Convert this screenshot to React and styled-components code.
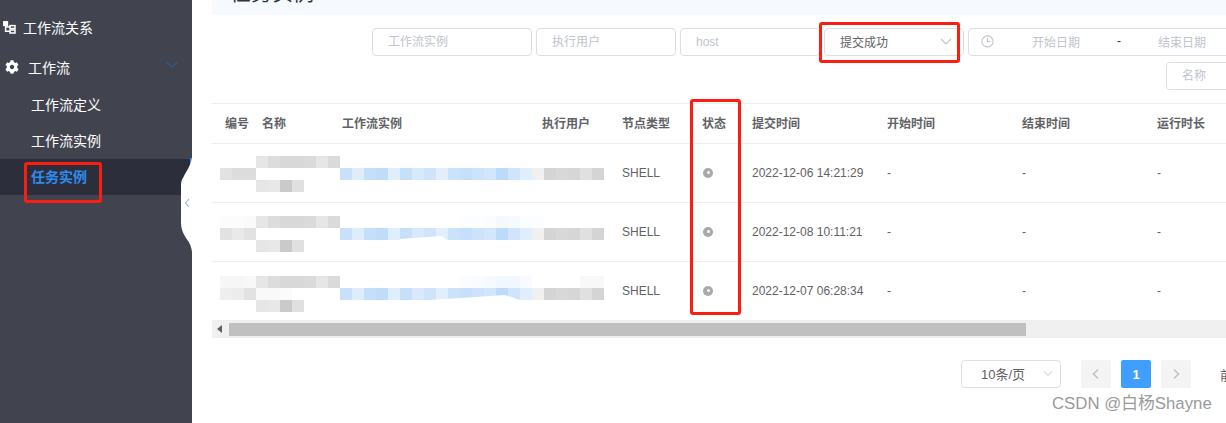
import styled, { createGlobalStyle } from "styled-components";
import { FaCog } from "react-icons/fa";

const GlobalStyle = createGlobalStyle`
  html, body { margin: 0; padding: 0; background: #fff; overflow: hidden; }
  * { box-sizing: border-box; }
  body { font-family: "Liberation Sans", "Noto Sans CJK SC", sans-serif; }
`;

const Page = styled.div`
  position: relative;
  display: flex;
  width: 1226px;
  height: 423px;
  overflow: hidden;
`;

/* sidebar */
const Sidebar = styled.aside`
  position: relative;
  flex: 0 0 192px;
  background: #41444f;
  padding-top: 9px;
`;
const MenuRow = styled.div`
  display: flex;
  align-items: center;
  height: 36px;
  margin-bottom: 4px;
  padding-left: ${(p) => p.$indent}px;
  color: #fff;
  font-size: 14px;
  gap: ${(p) => p.$gap}px;
`;
const MenuTitleChevron = styled.svg`
  margin-left: auto;
  margin-right: 12px;
  margin-top: -5px;
`;
const SubMenu = styled.div`
  margin-top: -2px;
`;
const SubItem = styled.div`
  display: flex;
  align-items: center;
  height: 36px;
  padding: 0 0 2px 31px;
  font-size: 14px;
  color: ${(p) => (p.$active ? "#2d8cf0" : "#fff")};
  font-weight: ${(p) => (p.$active ? 700 : 400)};
  background: ${(p) => (p.$active ? "#2c2f3b" : "transparent")};
`;
const ActiveMark = styled.div`
  position: absolute;
  left: 190px;
  top: 158px;
  width: 2px;
  height: 8px;
  background: #2d8cf0;
`;
const CollapseNotch = styled.svg`
  position: absolute;
  left: 178px;
  top: 155px;
`;

/* main column */
const Main = styled.main`
  flex: 1;
  min-width: 0;
  padding-left: 20px;
`;
const TitleBar = styled.div`
  height: 60px;
  margin-top: -45px;
  padding: 0 18px 7px;
  display: flex;
  align-items: flex-end;
  background: #f6faff;
  color: #2f3440;
  font-size: 21px;
  line-height: 30px;
`;
const Filters = styled.div`
  width: 1036px;
  padding-top: 13px;
  display: flex;
  flex-direction: column;
  gap: 6px;
`;
const FilterRow = styled.div`
  display: flex;
  justify-content: flex-end;
  gap: 4px;
`;
const TextInput = styled.input`
  width: ${(p) => p.$w}px;
  height: 28px;
  padding: 0 15px;
  border: 1px solid #dcdfe6;
  border-radius: 4px;
  outline: none;
  font: 12px "Liberation Sans", "Noto Sans CJK SC", sans-serif;
  color: #606266;
  &::placeholder { color: #c0c4cc; opacity: 1; }
`;
const SelectBox = styled.div`
  flex: 0 0 auto;
  display: flex;
  align-items: center;
  justify-content: space-between;
  width: ${(p) => p.$w}px;
  height: 28px;
  padding: 0 ${(p) => p.$right}px 2px ${(p) => p.$left}px;
  border: 1px solid #dcdfe6;
  border-radius: 4px;
  font-size: ${(p) => p.$size}px;
  color: #606266;
`;
const DateRange = styled.div`
  flex: 0 0 auto;
  display: flex;
  align-items: center;
  width: 280px;
  height: 28px;
  padding: 0 0 2px 12px;
  border: 1px solid #dcdfe6;
  border-radius: 4px;
  font-size: 12px;
`;
const ClockWrap = styled.svg`
  flex: 0 0 13px;
  margin-right: 7px;
`;
const DateHint = styled.span`
  flex: 0 0 ${(p) => p.$w}px;
  text-align: center;
  color: #c0c4cc;
`;
const DateDash = styled.span`
  flex: 0 0 16px;
  text-align: center;
  color: #303133;
`;

/* table */
const Table = styled.div`
  position: relative;
  margin-top: 13px;
  padding-left: 1px;
  border-top: 1px solid #ebeef5;
`;
const COLUMNS = "37px 80px 200px 80px 80px 50px 135px 135px 135px 135px";
const HeadRow = styled.div`
  display: grid;
  grid-template-columns: ${COLUMNS};
  align-items: center;
  height: 40px;
  margin-left: -1px;
  padding: 0 0 2px 1px;
  border-bottom: 1px solid #ebeef5;
  font-size: 12px;
  font-weight: 700;
  color: #606266;
`;
const BodyRow = styled.div`
  position: relative;
  display: grid;
  grid-template-columns: ${COLUMNS};
  align-items: center;
  height: 59px;
  margin-left: -1px;
  padding-left: 1px;
  border-bottom: 1px solid #ebeef5;
  font-size: 12px;
  color: #606266;
`;
const Cell = styled.div`
  padding-left: 12px;
  white-space: nowrap;
`;
const StatusDot = styled.span`
  display: flex;
  align-items: center;
  justify-content: center;
  width: 10px;
  height: 10px;
  margin: -1px 0 0 1px;
  border-radius: 50%;
  background: #a9a9a9;
  &::after {
    content: "";
    width: 3px;
    height: 3px;
    border-radius: 50%;
    background: #fff;
  }
`;
const Mosaic = styled.svg`
  position: absolute;
  left: 8px;
  top: ${(p) => p.$top}px;
`;
const ScrollTrack = styled.div`
  display: flex;
  align-items: center;
  height: 17px;
  margin-left: -1px;
  background: #f0f0f0;
  border-bottom: 1px solid #ebeef5;
`;
const ScrollArrow = styled.div`
  flex: 0 0 17px;
  display: flex;
  justify-content: center;
  padding-right: 2px;
`;
const ScrollThumb = styled.div`
  width: 797px;
  height: 13px;
  background: #c0c0c0;
`;

/* pagination */
const Pager = styled.div`
  display: flex;
  align-items: center;
  margin-top: 22px;
  padding-left: 749px;
  font-size: 13px;
  color: #606266;
  white-space: nowrap;
`;
const PageButton = styled.div`
  flex: 0 0 30px;
  display: flex;
  align-items: center;
  justify-content: center;
  height: 28px;
  margin-left: ${(p) => p.$gap}px;
  border-radius: 2px;
  background: ${(p) => (p.$active ? "#409eff" : "#f4f4f5")};
  color: #fff;
  font-weight: 700;
  font-size: 13px;
`;
const GotoText = styled.span`
  flex: 0 0 auto;
  margin-left: 29px;
`;

/* overlays */
const Marker = styled.div`
  position: absolute;
  left: ${(p) => p.$x}px;
  top: ${(p) => p.$y}px;
  width: ${(p) => p.$w}px;
  height: ${(p) => p.$h}px;
  border: 3px solid #fb1d10;
  border-radius: 3px;
`;
const Watermark = styled.div`
  position: absolute;
  left: 1052px;
  top: 394px;
  font-size: 16.8px;
  line-height: 20px;
  color: #9a9a9a;
  white-space: nowrap;
`;

const HEADERS = ["编号", "名称", "工作流实例", "执行用户", "节点类型", "状态", "提交时间", "开始时间", "结束时间", "运行时长"];

const BLUE = ["#c8e0fa", "#deecfc", "#c4dffa", "#c0dcf9", "#e0edfc", "#c6e0fa", "#d8e9fc", "#cfe4fb", "#e2eefc", "#cbe2fb", "#c6dffa", "#cde3fb", "#d3e6fb", "#bcdaf9", "#d0e4fb", "#dfedfc"];
const GRAY = ["#f0f0f0", "#d4d4d4", "#d8d8d8", "#d6d6d6", "#e0e0e0", "#d4d4d4"];
const TOP = ["#e6e6e6", "#dcdcdc", "#d8d8d8", "#d8d8d8", "#dadada", "#e6e6e6", "#dadada"];
const BOTTOM = ["#e6e6e6", "#e8e8e8", "#cacaca", "#e0e0e0"];

const ROWS = [
  {
    time: "2022-12-06 14:21:29",
    top: 12,
    left: ["#e2e2e2", "#dcdcdc", "#dcdcdc"],
    smear: null,
    pale: [],
  },
  {
    time: "2022-12-08 10:11:21",
    top: 13,
    left: ["#e2e2e2", "#e9e9e9", "#e2e2e2"],
    smear: "M180 24 L180 23 L222 20 L227 24 Z",
    pale: [[0, 0, "#fcfcfc"], [1, 0, "#fcfcfc"], [2, 0, "#fafafa"], [20, 0, "#fcfdff"], [21, 0, "#fbfdff"], [22, 0, "#fafcff"], [23, 0, "#f5f9fe"], [24, 0, "#f6faff"], [25, 0, "#fbfdff"], [26, 0, "#fcfdff"]],
  },
  {
    time: "2022-12-07 06:28:34",
    top: 14,
    left: ["#eeeeee", "#ececec", "#e2e2e2"],
    smear: "M210 24 L285 19 L300 24 Z",
    pale: [[0, 0, "#f6f6f6"], [1, 0, "#f6f6f6"], [2, 0, "#f8f8f8"], [3, 1, "#f9f9f9"], [4, 1, "#f9f9f9"], [5, 1, "#fbfbfb"], [20, 0, "#fafcff"], [21, 0, "#f8fbff"], [22, 0, "#f6faff"], [23, 0, "#f1f7fe"], [24, 0, "#f1f7fe"], [25, 0, "#f7faff"], [30, 0, "#f8f8f8"], [31, 0, "#f8f8f8"]],
  },
];

const MosaicBlocks = ({ row }) => {
  const block = (col, line, fill) => (
    <rect key={`${col}-${line}-${fill}`} x={col * 12} y={line * 12} width="12" height="12" fill={fill} />
  );
  return (
    <Mosaic $top={row.top} width="384" height="36" viewBox="0 0 384 36">
      {row.pale.map(([c, l, f]) => block(c, l, f))}
      {TOP.map((f, i) => block(3 + i, 0, f))}
      {row.left.map((f, i) => block(i, 1, f))}
      {BLUE.map((f, i) => block(10 + i, 1, f))}
      {GRAY.map((f, i) => block(26 + i, 1, f))}
      {BOTTOM.map((f, i) => block(3 + i, 2, f))}
      {row.smear && <path d={row.smear} fill="#fff" />}
    </Mosaic>
  );
};

const Chevron = ({ color = "#c0c4cc", size = 12, dir = "down", weight = 1.2 }) => {
  const d = {
    down: "M1 4 L6 9 L11 4",
    left: "M8 1.5 L3.5 6 L8 10.5",
    right: "M4 1.5 L8.5 6 L4 10.5",
  }[dir];
  return (
    <svg width={size} height={size} viewBox="0 0 12 12" fill="none" stroke={color} strokeWidth={weight}>
      <path d={d} />
    </svg>
  );
};

const RelationIcon = () => (
  <svg width="13" height="13" viewBox="0 0 13 13" fill="none" stroke="#fff" strokeWidth="1.5">
    <rect x="0.8" y="0.8" width="3.6" height="3.6" fill="#fff" />
    <path d="M2.6 4.4 V10.2 H7 M2.6 6 H7" />
    <rect x="7" y="4.6" width="5" height="3" />
    <rect x="7" y="9" width="5" height="3" />
  </svg>
);

const App = () => {
  return (
    <Page>
      <GlobalStyle />
      <Sidebar>
        <MenuRow $indent={3} $gap={7}>
          <RelationIcon />
          工作流关系
        </MenuRow>
        <MenuRow $indent={5} $gap={9}>
          <FaCog size={14} color="#fff" />
          工作流
          <MenuTitleChevron width="16" height="16" viewBox="0 0 16 16" fill="none" stroke="#2b5c92" strokeWidth="1.1">
            <path d="M2.5 5 L8 10 L13.5 5" />
          </MenuTitleChevron>
        </MenuRow>
        <SubMenu>
          <SubItem>工作流定义</SubItem>
          <SubItem>工作流实例</SubItem>
          <SubItem $active>任务实例</SubItem>
        </SubMenu>
        <ActiveMark />
        <CollapseNotch width="14" height="98" viewBox="0 0 14 98">
          <path d="M14 3 C12 12 9 15 6 21 C3.5 25 3 27 3 31 V68 C3 74 5 78 8 83 C11 87 13 90 14 97 Z" fill="#fff" />
          <path d="M11 44 L7.5 48 L11 52" fill="none" stroke="#8fb0e0" strokeWidth="1.1" />
        </CollapseNotch>
      </Sidebar>

      <Main>
        <TitleBar>任务实例</TitleBar>
        <Filters>
          <FilterRow>
            <TextInput $w={160} placeholder="工作流实例" />
            <TextInput $w={140} placeholder="执行用户" />
            <TextInput $w={140} placeholder="host" />
            <SelectBox $w={140} $size={12} $left={15} $right={11}>
              提交成功
              <Chevron />
            </SelectBox>
            <DateRange>
              <ClockWrap width="13" height="13" viewBox="0 0 13 13" fill="none" stroke="#c0c4cc" strokeWidth="1.1">
                <circle cx="6.5" cy="6.5" r="5.6" />
                <path d="M6.5 3 V6.8 H9.4" />
              </ClockWrap>
              <DateHint $w={110}>开始日期</DateHint>
              <DateDash>-</DateDash>
              <DateHint $w={110}>结束日期</DateHint>
            </DateRange>
          </FilterRow>
          <FilterRow>
            <TextInput $w={82} placeholder="名称" />
          </FilterRow>
        </Filters>

        <Table>
          <HeadRow>
            {HEADERS.map((h) => (
              <Cell key={h}>{h}</Cell>
            ))}
          </HeadRow>
          {ROWS.map((row) => (
            <BodyRow key={row.time}>
              <Cell />
              <Cell />
              <Cell />
              <Cell />
              <Cell>SHELL</Cell>
              <Cell>
                <StatusDot />
              </Cell>
              <Cell>{row.time}</Cell>
              <Cell>-</Cell>
              <Cell>-</Cell>
              <Cell>-</Cell>
              <MosaicBlocks row={row} />
            </BodyRow>
          ))}
          <ScrollTrack>
            <ScrollArrow>
              <svg width="5" height="8" viewBox="0 0 5 8">
                <path d="M5 0 L0 4 L5 8 Z" fill="#5f5f5f" />
              </svg>
            </ScrollArrow>
            <ScrollThumb />
          </ScrollTrack>
        </Table>

        <Pager>
          <SelectBox $w={100} $size={13} $left={19} $right={7}>
            10条/页
            <Chevron size={10} />
          </SelectBox>
          <PageButton $gap={20}>
            <Chevron dir="left" weight={1.7} />
          </PageButton>
          <PageButton $gap={10} $active>1</PageButton>
          <PageButton $gap={10}>
            <Chevron dir="right" weight={1.7} />
          </PageButton>
          <GotoText>前往</GotoText>
        </Pager>
      </Main>

      <Marker $x={24} $y={162} $w={78} $h={41} />
      <Marker $x={819} $y={22} $w={141} $h={41} />
      <Marker $x={690} $y={99} $w={51} $h={216} />
      <Watermark>CSDN @白杨Shayne</Watermark>
    </Page>
  );
};

export default App;
